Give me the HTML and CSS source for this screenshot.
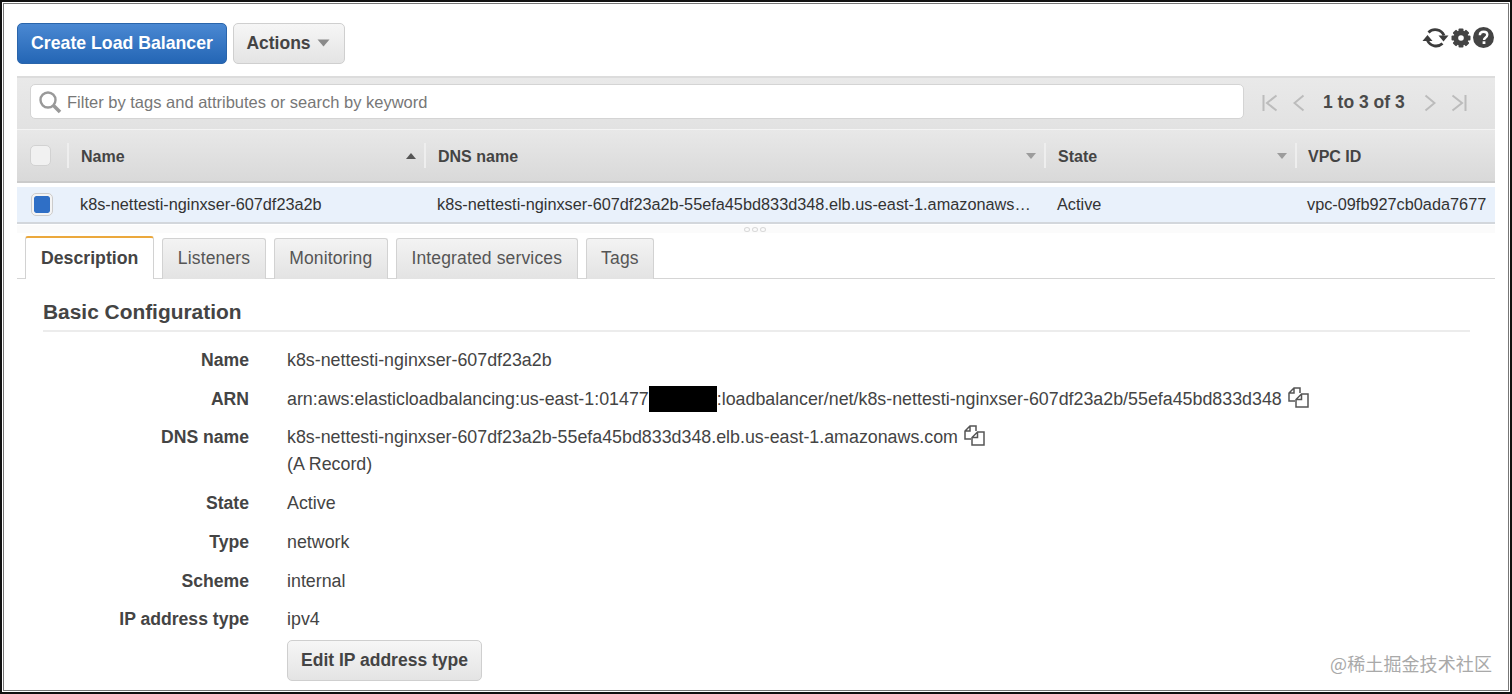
FILE: index.html
```html
<!DOCTYPE html>
<html lang="en">
<head>
<meta charset="utf-8">
<title>Load Balancers</title>
<link rel="stylesheet" href="styles.css">
</head>
<body>
<div class="frame">
  <div class="toolbar">
    <button class="btn btn-primary">Create Load Balancer</button>
    <button class="btn btn-actions">Actions <svg class="caret" width="13" height="8" viewBox="0 0 13 8"><path d="M0.5 0.5H12.5L6.5 7.5Z" fill="#8a8a8a"/></svg></button>
    <div class="tool-icons">
      <svg width="27" height="24" viewBox="0 0 27 24"><g fill="none" stroke="#3c3c3c" stroke-width="2.8"><path d="M6.500 6.500A9.500 9.500 0 0 1 22 9.500"/><path d="M20.500 17.500A9.500 9.500 0 0 1 5.500 14.500"/></g><path d="M0.500 15H10.500L5.500 9Z" fill="#3c3c3c"/><path d="M16.500 9.500H26.500L21.500 15.500Z" fill="#3c3c3c"/></svg>
      <svg width="20" height="20" viewBox="0 0 20 20"><g fill="#444"><circle cx="10" cy="10" r="7.500"/><rect x="7.500" y="0.500" width="5" height="19" rx="1"/><rect x="7.500" y="0.500" width="5" height="19" rx="1" transform="rotate(45 10 10)"/><rect x="7.500" y="0.500" width="5" height="19" rx="1" transform="rotate(90 10 10)"/><rect x="7.500" y="0.500" width="5" height="19" rx="1" transform="rotate(135 10 10)"/></g><circle cx="10" cy="10" r="2.800" fill="#fff"/></svg>
      <svg width="21" height="21" viewBox="0 0 21 21"><circle cx="10.500" cy="10.500" r="10.500" fill="#444"/><path d="M6.800 8.200C6.900 5.900 8.500 4.700 10.600 4.700C12.800 4.700 14.300 6 14.300 7.800C14.300 9.300 13.400 10 12.400 10.700C11.400 11.400 11 11.800 11 13" fill="none" stroke="#fff" stroke-width="2.400"/><rect x="9.600" y="14.300" width="2.800" height="2.700" fill="#fff"/></svg>
    </div>
  </div>

  <div class="filter-bar">
    <div class="search">
      <svg width="24" height="24" viewBox="0 0 24 24"><circle cx="10" cy="10" r="7.500" fill="none" stroke="#999" stroke-width="2.400"/><path d="M15.500 15.500L22 22" stroke="#999" stroke-width="3.600"/></svg>
      <span class="search-text">Filter by tags and attributes or search by keyword</span>
    </div>
    <div class="pager">
      <svg width="16" height="18" viewBox="0 0 16 18"><path d="M1.500 1V17M14.500 1.500L5 9L14.500 16.500" fill="none" stroke="#bcbcbc" stroke-width="2"/></svg>
      <svg class="pager-prev" width="12" height="18" viewBox="0 0 12 18"><path d="M10.500 1.500L1.500 9L10.500 16.500" fill="none" stroke="#bcbcbc" stroke-width="2"/></svg>
      <span class="pager-text">1 to 3 of 3</span>
      <svg class="pager-next" width="12" height="18" viewBox="0 0 12 18"><path d="M1.500 1.500L10.500 9L1.500 16.500" fill="none" stroke="#bcbcbc" stroke-width="2"/></svg>
      <svg class="pager-last" width="16" height="18" viewBox="0 0 16 18"><path d="M14.500 1V17M1.500 1.500L11 9L1.500 16.500" fill="none" stroke="#bcbcbc" stroke-width="2"/></svg>
    </div>
  </div>

  <div class="grid-row grid-head">
    <div class="cell-check"><span class="checkbox"></span></div>
    <div class="th">Name<span class="sort sort-up"></span></div>
    <div class="th">DNS name<span class="sort"></span></div>
    <div class="th">State<span class="sort"></span></div>
    <div class="th th-last">VPC ID</div>
  </div>
  <div class="grid-row grid-body">
    <div class="cell-check"><span class="checkbox checked"></span></div>
    <div class="td">k8s-nettesti-nginxser-607df23a2b</div>
    <div class="td">k8s-nettesti-nginxser-607df23a2b-55efa45bd833d348.elb.us-east-1.amazonaws…</div>
    <div class="td">Active</div>
    <div class="td td-last">vpc-09fb927cb0ada7677</div>
  </div>

  <div class="splitter"><span class="grip"></span><span class="grip"></span><span class="grip"></span></div>

  <div class="tabs">
    <div class="tab tab-active">Description</div>
    <div class="tab">Listeners</div>
    <div class="tab">Monitoring</div>
    <div class="tab">Integrated services</div>
    <div class="tab">Tags</div>
  </div>

  <div class="details">
    <h2 class="section-title">Basic Configuration</h2>
    <dl class="props">
      <dt>Name</dt>
      <dd>k8s-nettesti-nginxser-607df23a2b</dd>
      <dt>ARN</dt>
      <dd>arn:aws:elasticloadbalancing:us-east-1:01477<span class="redact"></span>:loadbalancer/net/k8s-nettesti-nginxser-607df23a2b/55efa45bd833d348<svg class="copy" width="21" height="21" viewBox="0 0 21 21"><path d="M7 14H1V6L6 1H12V6M6 1V6H1M13.500 7L8 12.500V20H20V7ZM13.500 7V12.500H8" fill="none" stroke="#555" stroke-width="1.500"/></svg></dd>
      <dt>DNS name</dt>
      <dd class="dd-multi">k8s-nettesti-nginxser-607df23a2b-55efa45bd833d348.elb.us-east-1.amazonaws.com<svg class="copy" width="21" height="21" viewBox="0 0 21 21"><path d="M7 14H1V6L6 1H12V6M6 1V6H1M13.500 7L8 12.500V20H20V7ZM13.500 7V12.500H8" fill="none" stroke="#555" stroke-width="1.500"/></svg><br>(A Record)</dd>
      <dt>State</dt>
      <dd>Active</dd>
      <dt>Type</dt>
      <dd>network</dd>
      <dt>Scheme</dt>
      <dd>internal</dd>
      <dt>IP address type</dt>
      <dd>ipv4</dd>
      <dt class="dt-empty"></dt>
      <dd><button class="btn btn-edit">Edit IP address type</button></dd>
    </dl>
  </div>
  <div class="watermark">@稀土掘金技术社区</div>
</div>
</body>
</html>
```
FILE: styles.css
```css
* { box-sizing: border-box; }
html, body { margin: 0; padding: 0; height: 100%; background: #fff; }
body { font-family: "Liberation Sans", Arial, sans-serif; font-size: 17px; color: #444; overflow: hidden; }

.frame {
  position: relative;
  height: 694px;
  padding: 21px 15px 0 15px;
  border: 2px solid #111;
  outline: 1px solid #777;
  outline-offset: -4px;
  overflow: hidden;
}

.btn { font-family: inherit; font-size: 17.500px; font-weight: 700; border-radius: 5px; cursor: pointer; }
.btn-primary {
  width: 210px; height: 41px; color: #fff; font-size: 17.700px;
  background: linear-gradient(#4a88d2, #2466b5);
  border: 1px solid #2a65ab;
}
.btn-actions, .btn-edit {
  color: #444;
  background: linear-gradient(#f6f6f6, #e4e4e4);
  border: 1px solid #cfcfcf;
}
.btn-actions { width: 112px; height: 41px; margin-left: 6px; display: inline-flex; align-items: center; justify-content: center; gap: 6px; padding-right: 8px; }
.caret { margin-top: -2px; }

.toolbar { display: flex; align-items: center; height: 41px; }
.tool-icons { margin-left: auto; margin-right: 1px; display: flex; align-items: center; gap: 2px; margin-top: -12px; }

.filter-bar {
  display: flex; align-items: center;
  height: 53px; margin-top: 12px;
  padding-left: 13px; padding-bottom: 4px;
  background: linear-gradient(#e9e9e9, #e2e2e2);
  border-top: 2px solid #dcdcdc;
}
.search {
  width: 1214px; height: 35px;
  display: flex; align-items: center; gap: 5px;
  padding-left: 7px;
  background: #fff;
  border: 1px solid #d4d4d4;
  border-radius: 5px;
  color: #777;
  font-size: 16.500px;
}
.search-text { margin-top: 2px; }
.pager { display: flex; align-items: center; margin-left: 18px; margin-top: 2px; }
.pager-prev { margin-left: 15px; }
.pager-text { margin-left: 18px; font-weight: 700; font-size: 17.500px; color: #4a4a4a; }
.pager-next { margin-left: 19px; }
.pager-last { margin-left: 15px; }

.grid-row { display: grid; grid-template-columns: 50px 357px 620px 251px 200px; }
.grid-head {
  height: 54px; align-items: center;
  background: linear-gradient(#e8e8e8, #d9d9d9);
  border-top: 1px solid #f4f4f4;
  border-bottom: 2px solid #cbcbcb;
  font-weight: 700;
  font-size: 16px;
}
.grid-body {
  height: 37px; margin-top: 4px; align-items: center;
  background: #e9f1fb;
  border-bottom: 2px solid #d3d7dc;
  font-size: 16.300px;
  color: #333;
}
.cell-check { display: flex; padding-left: 13px; }
.checkbox { width: 21px; height: 21px; border: 1px solid #d2d2d2; border-radius: 5px; background: #f1f1f1; display: block; }
.checked { border: 3px solid #f4f4f4; outline: 1px solid #ccc; outline-offset: -1px; width: 22px; height: 23px; margin-left: 1px; background: #2f6fc6; background-clip: padding-box; }

.th {
  position: relative;
  height: 25px; line-height: 27px;
  padding-left: 12px;
  border-left: 2px solid #eeeeee;
}
.th-last { padding-left: 11px; }
.sort { position: absolute; right: 8px; top: 10px; width: 0; height: 0; border-left: 5px solid transparent; border-right: 5px solid transparent; border-top: 6px solid #9c9c9c; }
.sort-up { border-top: 0; border-bottom: 6px solid #555; }
.td { padding-left: 13px; white-space: nowrap; }
.td-last { padding-left: 12px; }

.splitter {
  height: 8px; margin-top: 1px; margin-bottom: 4px;
  display: flex; justify-content: center; align-items: center; gap: 2px;
  background: #fbfbfb;
  padding-right: 2px;
}
.grip { width: 6px; height: 5px; border: 1px solid #d8d8d8; border-radius: 50%; }

.tabs { display: flex; height: 42px; padding: 0 8px; border-bottom: 1px solid #d5d5d5; gap: 8px; }
.tab {
  height: 41px; margin-top: 1px; padding: 0 14.500px; line-height: 39px;
  background: linear-gradient(#f3f3f3, #e3e3e3);
  border: 1px solid #d2d2d2;
  border-bottom: 0;
  border-radius: 3px 3px 0 0;
  font-size: 17.500px;
  letter-spacing: 0.150px;
  color: #555;
}
.tab-active {
  height: 43px; margin-top: -1px; padding: 0 15px; line-height: 41px;
  background: #fff;
  border-top: 2px solid #eba83c;
  font-size: 17.700px;
  letter-spacing: 0;
  font-weight: 700;
  color: #444;
}

.details { padding: 0 25px 0 26px; }
.section-title { margin: 17px 0 0; height: 36px; font-size: 20.900px; line-height: 32px; font-weight: 700; color: #444; border-bottom: 2px solid #ececec; }
.props { display: grid; grid-template-columns: 206px 1fr; column-gap: 38px; margin: 15px 0 0; }
.props dt { font-weight: 700; text-align: right; line-height: 27px; height: 38.700px; font-size: 17.600px; }
.props dd { margin: 0; line-height: 27px; height: 38.700px; color: #444; font-size: 17.830px; white-space: nowrap; display: block; }
.props .dd-multi { height: 66px; }
.redact { display: inline-block; width: 68px; height: 26px; background: #000; vertical-align: -7px; }
.copy { margin-left: 6px; vertical-align: -3px; }
.btn-edit { width: 195px; height: 41px; margin-top: -5px; display: block; }

.watermark {
  position: absolute; right: 18px; bottom: 16px;
  font-family: "Noto Sans CJK SC", sans-serif;
  font-size: 18px; color: #a9a9a9;
  letter-spacing: 0.100px;
}
```
